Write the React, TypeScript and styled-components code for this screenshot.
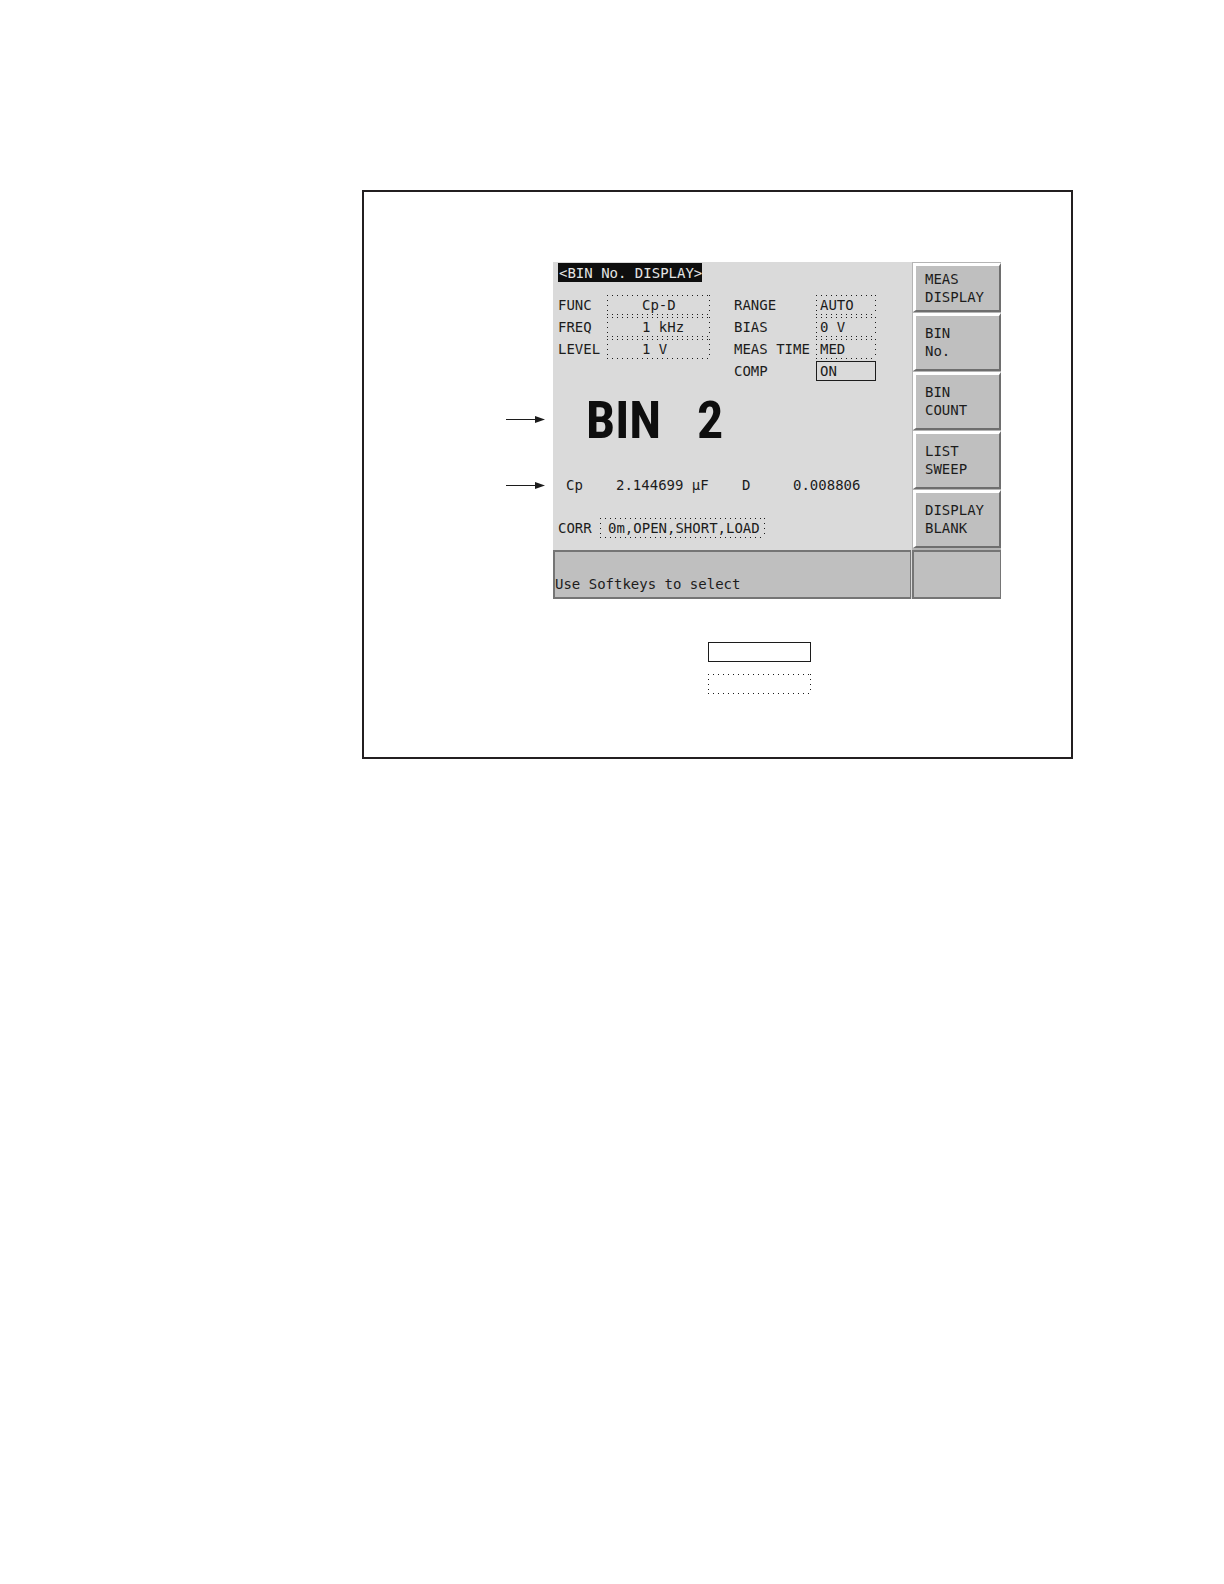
import React from "react";
import styled, { createGlobalStyle, css } from "styled-components";

const ink = "#1c1c1c";
const line = "#757575";

const GlobalStyle = createGlobalStyle`
  * { box-sizing: border-box; }
  body { margin: 0; background: #fff; color: ${ink}; }
`;

const mono = css`
  font-family: "DejaVu Sans Mono", "Liberation Mono", monospace;
  font-size: 14px;
  line-height: 18px;
  color: ${ink};
`;

/* One dot every five pixels along each edge */
const dottedEdge = css`
  border: 0;
  background:
    linear-gradient(90deg, ${ink} 1px, transparent 1px) 0 0 / 5px 1px repeat-x,
    linear-gradient(90deg, ${ink} 1px, transparent 1px) 0 100% / 5px 1px repeat-x,
    linear-gradient(${ink} 1px, transparent 1px) 0 0 / 1px 5px repeat-y,
    linear-gradient(${ink} 1px, transparent 1px) 100% 0 / 1px 5px repeat-y;
`;

const solidEdge = css`
  border: 1px solid ${ink};
  background: transparent;
`;

const Page = styled.main`
  padding: 190px 151px 190px 362px;
`;

const Figure = styled.figure`
  margin: 0;
  padding: 70px 70px 63px 142px;
  border: 2px solid #231f20;
`;

const Illustration = styled.div`
  display: flex;
  gap: 8px;
`;

const Callouts = styled.div`
  display: flex;
  flex-direction: column;
  flex: none;
  gap: 58px;
  width: 39px;
  padding-top: 153px;
`;

const ArrowSvg = styled.svg`
  display: block;
  width: 39px;
  height: 8px;
`;

const Screen = styled.section`
  ${mono}
  flex: 1;
  display: grid;
  grid-template-columns: 1fr 89px;
  grid-template-rows: 288px 49px;
  background: #dadada;
`;

const Readings = styled.div`
  padding: 1px 0 0 5px;
`;

const Title = styled.h1`
  display: inline-block;
  vertical-align: top;
  margin: 0;
  padding: 1px 0 0 1px;
  font-size: 14px;
  line-height: 18px;
  font-weight: 400;
  background: #0e0e0e;
  color: #e4e4e4;
`;

const Settings = styled.div`
  display: flex;
  gap: 24px;
  margin-top: 13px;
`;

const SettingColumn = styled.div<{ $label: number; $value: number }>`
  display: grid;
  grid-template-columns: ${(p) => p.$label}px ${(p) => p.$value}px;
  grid-auto-rows: 20px;
  align-content: start;
  align-items: center;
  row-gap: 2px;
`;

const Value = styled.input<{ $solid?: boolean; $indent: number }>`
  ${mono}
  display: block;
  width: 100%;
  height: 20px;
  margin: 0;
  padding: 0 0 0 ${(p) => p.$indent}px;
  border-radius: 0;
  outline: 0;
  ${(p) => (p.$solid ? solidEdge : dottedEdge)}
`;

const BinNumber = styled.div`
  display: flex;
  gap: 36px;
  margin-top: 14px;
  padding-left: 28px;
  font-family: "Roboto Condensed", Roboto, "Liberation Sans", sans-serif;
  font-size: 52px;
  line-height: 52px;
  font-weight: 700;
  color: #0e0e0e;
`;

const Measurements = styled.div`
  display: grid;
  grid-template-columns: 50px 126px 51px 1fr;
  margin-top: 28px;
  padding-left: 8px;
  line-height: 20px;
`;

const Correction = styled.div`
  display: grid;
  grid-template-columns: 42px 165px;
  align-items: center;
  margin-top: 23px;
`;

const Softkeys = styled.nav`
  display: grid;
  grid-template-rows: 49px repeat(4, 58px);
  row-gap: 1px;
  padding: 1px 0 2px 1px;
  background: #b4b4b4;
`;

const Softkey = styled.button`
  ${mono}
  display: flex;
  align-items: center;
  margin: 0;
  padding: 0 0 1px 9px;
  border: 3px solid;
  border-width: 3px 2px 2px 3px;
  border-color: #fff #6e6e6e #6e6e6e #fff;
  border-radius: 0;
  background: #bfbfbf;
  text-align: left;
  white-space: pre-line;
`;

const Message = styled.div`
  display: flex;
  align-items: flex-end;
  margin-right: 1px;
  padding: 0 0 4px;
  border: 2px solid ${line};
  border-width: 2px 1px 2px 2px;
  background: #bfbfbf;
`;

const StatusCell = styled.div`
  border: 1px solid ${line};
  border-width: 2px 1px 2px 2px;
  background: #bfbfbf;
`;

const Legend = styled.div`
  display: grid;
  gap: 12px;
  margin: 43px 0 0 202px;
`;

const LegendBox = styled.div<{ $solid?: boolean }>`
  width: 103px;
  height: 20px;
  ${(p) => (p.$solid ? solidEdge : dottedEdge)}
`;

const Arrow = () => (
  <ArrowSvg viewBox="0 0 39 8" aria-hidden="true">
    <path d="M0 4.5H30" stroke={ink} strokeWidth="1" />
    <path d="M29 1L39 4.5L29 8Z" fill={ink} />
  </ArrowSvg>
);

type FieldProps = { name: string; value: string; indent: number; solid?: boolean };

const Field = ({ name, value, indent, solid }: FieldProps) => {
  const id = name.toLowerCase().replace(" ", "-");
  return (
    <>
      <label htmlFor={id}>{name}</label>
      <Value id={id} defaultValue={value} $indent={indent} $solid={solid} />
    </>
  );
};

const softkeys = ["MEAS\nDISPLAY", "BIN\nNo.", "BIN\nCOUNT", "LIST\nSWEEP", "DISPLAY\nBLANK"];

export default function App() {
  return (
    <>
      <GlobalStyle />
      <Page>
        <Figure>
          <Illustration>
            <Callouts>
              <Arrow />
              <Arrow />
            </Callouts>
            <Screen>
              <Readings>
                <Title>&lt;BIN No. DISPLAY&gt;</Title>
                <Settings>
                  <SettingColumn $label={49} $value={103}>
                    <Field name="FUNC" value="Cp-D" indent={35} />
                    <Field name="FREQ" value="1 kHz" indent={35} />
                    <Field name="LEVEL" value="1 V" indent={35} />
                  </SettingColumn>
                  <SettingColumn $label={82} $value={60}>
                    <Field name="RANGE" value="AUTO" indent={4} />
                    <Field name="BIAS" value="0 V" indent={4} />
                    <Field name="MEAS TIME" value="MED" indent={4} />
                    <Field name="COMP" value="ON" indent={3} solid />
                  </SettingColumn>
                </Settings>
                <BinNumber>
                  <span>BIN</span>
                  <span>2</span>
                </BinNumber>
                <Measurements>
                  <span>Cp</span>
                  <span>2.144699 µF</span>
                  <span>D</span>
                  <span>0.008806</span>
                </Measurements>
                <Correction>
                  <Field name="CORR" value="0m,OPEN,SHORT,LOAD" indent={8} />
                </Correction>
              </Readings>
              <Softkeys>
                {softkeys.map((key) => (
                  <Softkey key={key} type="button">
                    {key}
                  </Softkey>
                ))}
              </Softkeys>
              <Message>Use Softkeys to select</Message>
              <StatusCell />
            </Screen>
          </Illustration>
          <Legend>
            <LegendBox $solid />
            <LegendBox />
          </Legend>
        </Figure>
      </Page>
    </>
  );
}
